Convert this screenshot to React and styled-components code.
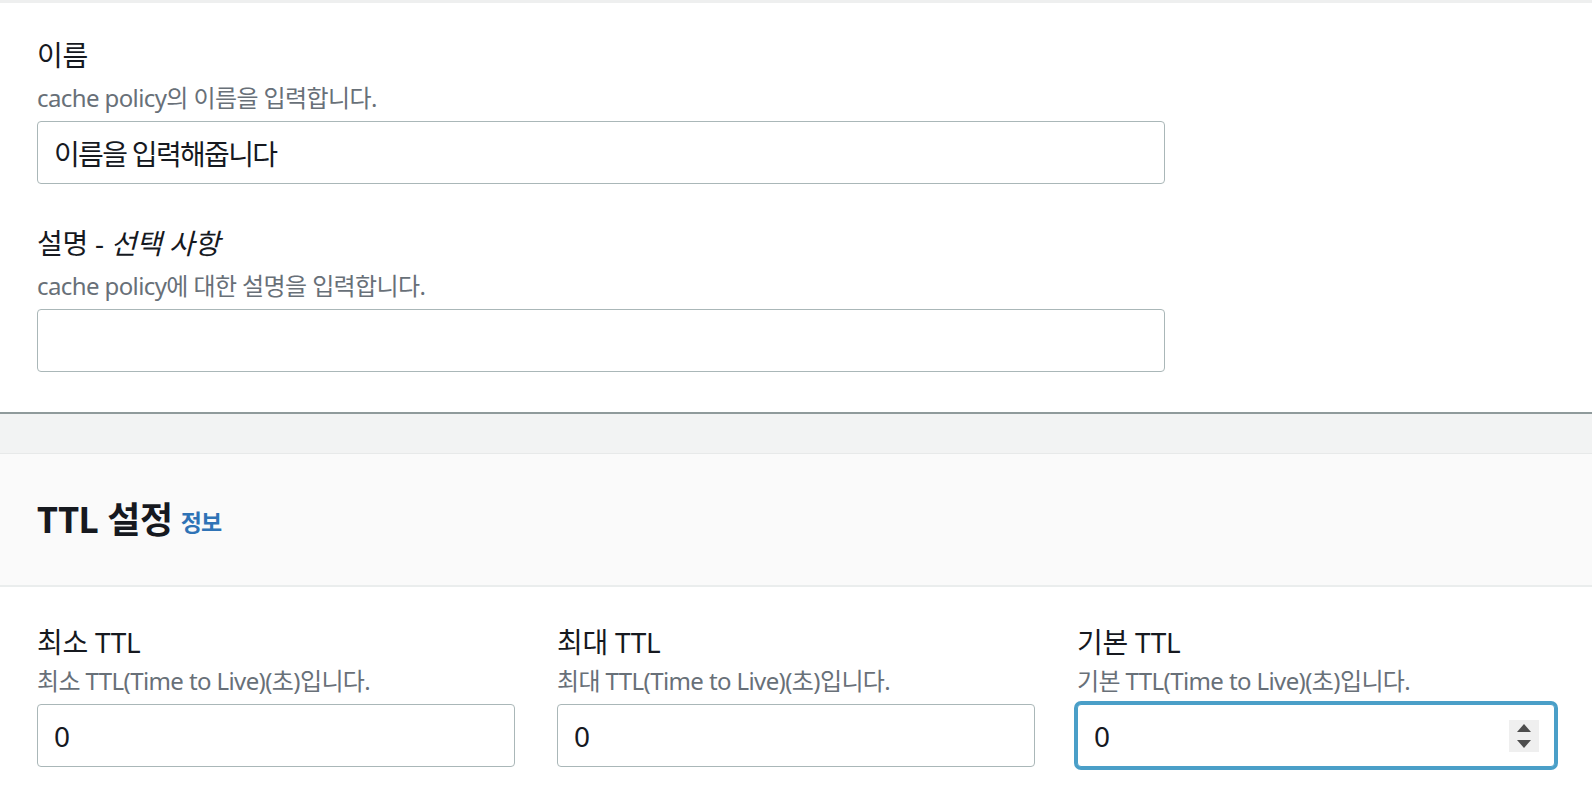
import React from "react";
import styled, { createGlobalStyle } from "styled-components";

const Global = createGlobalStyle`
  html, body { margin: 0; padding: 0; background: #ffffff; }
  body {
    font-family: "Noto Sans", "Noto Sans CJK KR", sans-serif;
    color: #16191f;
    -webkit-font-smoothing: antialiased;
  }
  * { box-sizing: border-box; }
`;

const Page = styled.div`
  width: 1592px;
  min-height: 806px;
  background: #ffffff;
  border-top: 3px solid #eeefef;
`;

const FormSection = styled.section`
  padding: 38px 37px 40px;
  background: #ffffff;
  border-bottom: 2px solid #8f9a9b;
  display: flex;
  flex-direction: column;
  gap: 45px;
`;

const Gap = styled.div`
  height: 40px;
  background: #f2f3f3;
  border-bottom: 1px solid #e7e9e9;
`;

const Header = styled.header`
  height: 133px;
  background: #fafafa;
  border-bottom: 2px solid #eaeded;
  padding: 0 37px;
  display: flex;
  align-items: center;
  gap: 8px;
`;

const Title = styled.h2`
  margin: 0;
  font-size: 36px;
  font-weight: 700;
  letter-spacing: -0.01em;
  color: #16191f;
  line-height: 44px;
`;

const InfoLink = styled.a`
  font-size: 23px;
  font-weight: 700;
  color: #2f73b6;
  text-decoration: none;
  letter-spacing: -0.04em;
  line-height: 44px;
  padding-top: 4px;
`;

const TtlSection = styled.section`
  padding: 41px 37px 0;
  display: grid;
  grid-template-columns: repeat(3, 1fr);
  column-gap: 42px;
`;

const Field = styled.div`
  display: flex;
  flex-direction: column;
  max-width: ${(p) => p.$max || "none"};
`;

const Label = styled.label`
  font-size: 28px;
  line-height: 28px;
  color: #16191f;
  letter-spacing: -0.01em;
`;

const Em = styled.i`
  font-style: italic;
`;

const Desc = styled.div`
  margin-top: ${(p) => p.$gap || "13px"};
  font-size: 24px;
  line-height: 24px;
  color: #687078;
  letter-spacing: -0.025em;
`;

const Box = styled.div`
  margin-top: 11px;
  height: 63px;
  display: flex;
  align-items: center;
  border: 1px solid ${(p) => (p.$focus ? "#4a9fc8" : "#aab7b8")};
  border-radius: 4px;
  background: #ffffff;
  box-shadow: ${(p) => (p.$focus ? "0 0 0 3px #4a9fc8" : "none")};
  padding: 0 15px 0 16px;
`;

const TextInput = styled.input`
  flex: 1;
  min-width: 0;
  border: none;
  outline: none;
  background: transparent;
  font-family: "Noto Sans", "Noto Sans CJK KR", sans-serif;
  font-size: 28px;
  letter-spacing: ${(p) => p.$ls || "0"};
  color: #16191f;
  padding: 0;
  height: 100%;
`;

const Spinner = styled.div`
  width: 30px;
  height: 32px;
  background: #efefef;
  display: flex;
  flex-direction: column;
  align-items: center;
  justify-content: center;
  gap: 8px;
`;

const Arrow = styled.span`
  width: 0;
  height: 0;
  border-left: 7px solid transparent;
  border-right: 7px solid transparent;
  ${(p) =>
    p.$down
      ? "border-top: 8px solid #4d4d4d;"
      : "border-bottom: 8px solid #4d4d4d;"}
`;

const ttl = [
  { label: "최소 TTL", desc: "최소 TTL(Time to Live)(초)입니다.", focus: false },
  { label: "최대 TTL", desc: "최대 TTL(Time to Live)(초)입니다.", focus: false },
  { label: "기본 TTL", desc: "기본 TTL(Time to Live)(초)입니다.", focus: true },
];

export default function App() {
  return (
    <>
      <Global />
      <Page>
        <FormSection>
          <Field $max="1128px">
            <Label>이름</Label>
            <Desc $gap="17px">cache policy의 이름을 입력합니다.</Desc>
            <Box>
              <TextInput $ls="-0.06em" defaultValue="이름을 입력해줍니다" />
            </Box>
          </Field>
          <Field $max="1128px">
            <Label>
              설명 - <Em>선택 사항</Em>
            </Label>
            <Desc $gap="17px">cache policy에 대한 설명을 입력합니다.</Desc>
            <Box>
              <TextInput defaultValue="" />
            </Box>
          </Field>
        </FormSection>
        <Gap />
        <Header>
          <Title>TTL 설정</Title>
          <InfoLink href="#">정보</InfoLink>
        </Header>
        <TtlSection>
          {ttl.map((t) => (
            <Field key={t.label}>
              <Label>{t.label}</Label>
              <Desc>{t.desc}</Desc>
              <Box $focus={t.focus}>
                <TextInput defaultValue="0" />
                {t.focus && (
                  <Spinner>
                    <Arrow />
                    <Arrow $down />
                  </Spinner>
                )}
              </Box>
            </Field>
          ))}
        </TtlSection>
      </Page>
    </>
  );
}
